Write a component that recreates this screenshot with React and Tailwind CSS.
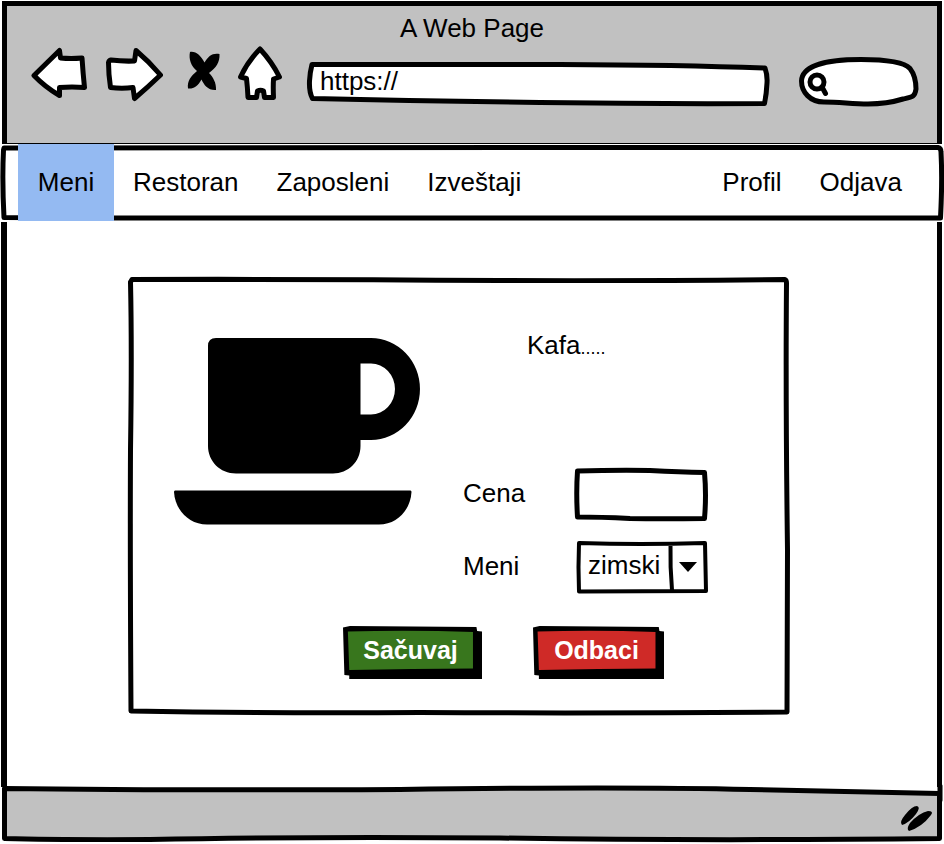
import React from "react";

// Hand-drawn outline that stretches to fill its positioned parent.
function Sketch({ viewBox, children }) {
  return (
    <svg
      aria-hidden="true"
      className="pointer-events-none absolute inset-0 h-full w-full overflow-visible"
      viewBox={viewBox}
      preserveAspectRatio="none"
      fill="none"
      stroke="#000"
      strokeWidth="5"
      strokeLinejoin="round"
      strokeLinecap="round"
    >
      {children}
    </svg>
  );
}

function ToolButton({ label, viewBox, className, children }) {
  return (
    <button type="button" aria-label={label} className={`h-[60px] shrink-0 ${className}`}>
      <svg
        aria-hidden="true"
        className="h-full w-full"
        viewBox={viewBox}
        fill="#fff"
        stroke="#000"
        strokeWidth="5"
        strokeLinejoin="round"
        strokeLinecap="round"
      >
        {children}
      </svg>
    </button>
  );
}

function BrowserHeader() {
  return (
    <header className="mx-0.5 mt-px h-[143px] border-x-[5px] border-t-[5px] border-b border-black bg-[#c1c1c1]">
      <h1 className="pt-1 text-center text-[26px] leading-9">A Web Page</h1>
      <div className="flex items-end gap-4 pr-[18px] pl-6">
        <ToolButton label="Back" viewBox="31 46 58 60" className="w-[58px]">
          <path d="M34 75.500L59.500 50.500L60.500 58Q71 59 82 58Q83 73 84.500 87.500Q72 86.500 59.500 87.500L59.500 95.500Q45 87 34 75.500Z" />
        </ToolButton>
        <ToolButton label="Forward" viewBox="105 46 58 60" className="w-[58px]">
          <path d="M111 60Q123 61.500 134.500 61L136 50.500Q149 61.500 160.500 75Q148 87 134.500 98.500L133 87.500Q122 89 110.500 87.500Q108.500 74 108.500 62.500Q109 60.500 111 60Z" />
        </ToolButton>
        <ToolButton label="Stop" viewBox="179 46 42 60" className="w-[42px]">
          <path
            stroke="none"
            fill="#000"
            d="M190 52C196 51 201 56 204.500 62.500C208 56 213 52.500 219.500 54C220 62 216 68 209 73C213 77 216.500 83 216 90C208 90.500 204 85 201.500 79.500C198 86 194 89 188 88.500C187 81 191 76 197 71C191 66 188.500 59 190 52Z"
          />
        </ToolButton>
        <ToolButton label="Home" viewBox="237 46 46 60" className="w-[46px]">
          <path d="M260 49Q272 62 279.500 77L273.500 79Q273 87 273.500 97.500L264.500 97.500L263.500 91Q260.500 89.500 257.500 91L256.500 97.500L248 97.500Q247.500 87 246.500 78.500L240.500 77Q248 61 260 49Z" />
        </ToolButton>
        <div className="relative ml-2 h-[45px] min-w-0 flex-1">
          <Sketch viewBox="307 60 463 45">
            <path
              fill="#fff"
              d="M312 63.500Q440 64 560 63.500Q680 64 765 67Q767.500 74 767 82Q766.500 93 764.500 102.500Q650 103 540 101.500Q420 100 312.500 97.500Q309 91 309.500 80Q310 71 312 63.500Z"
            />
          </Sketch>
          <input
            type="text"
            aria-label="Address"
            defaultValue="https://"
            className="relative h-full w-full bg-transparent pr-4 pb-1 pl-[13px] text-[26px] outline-none"
          />
        </div>
        <div className="relative ml-[13px] h-[50px] w-[120px] shrink-0">
          <Sketch viewBox="799 56 120 50">
            <path
              fill="#fff"
              d="M824 102C810 102 801.500 92 801.500 81C802 66 825 59.500 861 59.500C885 59.500 904 62 910 68.500C915 75 916 83 916 89C915 97 912 97 903 99C890 103 880 104 868 104C852 104 840 102 824 102Z"
            />
            <circle cx="817" cy="82" r="7" />
            <path d="M822 87L825.500 93.500" />
          </Sketch>
          <input
            type="search"
            aria-label="Search"
            className="relative h-full w-full appearance-none bg-transparent pr-3 pl-8 text-xl outline-none"
          />
        </div>
      </div>
    </header>
  );
}

function NavLink({ active, children }) {
  return (
    <a
      href="#"
      aria-current={active ? "page" : undefined}
      className={`flex min-w-24 items-center justify-center px-[19px] ${active ? "bg-[#94baf2]" : ""}`}
    >
      {children}
    </a>
  );
}

function NavBar() {
  return (
    <nav className="relative flex h-[77px] justify-between pr-[23px] pl-[18px] text-[26px]">
      <Sketch viewBox="0 144 944 77">
        <path d="M4 148Q300 147.500 600 147.500L938 147.500Q941 148 941 152Q942.500 180 940.500 218L600 218Q300 219 100 218L4 217.500Q2 180 3.500 150Z" />
      </Sketch>
      <div className="relative flex">
        <NavLink active>Meni</NavLink>
        <NavLink>Restoran</NavLink>
        <NavLink>Zaposleni</NavLink>
        <NavLink>Izveštaji</NavLink>
      </div>
      <div className="relative flex">
        <NavLink>Profil</NavLink>
        <NavLink>Odjava</NavLink>
      </div>
    </nav>
  );
}

function CupIcon() {
  return (
    <svg role="img" aria-label="Kafa" className="mt-[13px] h-[187px] w-[246px] shrink-0" viewBox="174 338 246 187">
      <path
        fillRule="evenodd"
        d="M216 338H371A49 51 0 0 1 371 440H360.500V446C360.500 462 348 473.500 333 473.500H236C220 473.500 208 461 208 446V346Q208 338 216 338ZM360.500 363.500V414.500H371A24 25.500 0 0 0 371 363.500Z"
      />
      <path d="M175 490.500H410.500Q411.500 490.500 411.500 492C410.500 510 397 524.500 379 524.500H207C189 524.500 175 510 174 492Q174 490.500 175 490.500Z" />
    </svg>
  );
}

function ActionButton({ tone, className, children }) {
  return (
    <button type="button" className={`relative h-[54px] pr-1 pb-1 text-[25px] font-bold text-white ${className}`}>
      <Sketch viewBox="0 0 100 54">
        <path stroke="none" fill="#000" d="M0 1.500L5 0L96 1L96.500 5L100 5.500V53H4.500L4.500 49.500L1 49Z" />
        <path stroke="none" fill={tone} d="M3.500 5.500Q50 4 93.500 6V42.500Q50 42.500 4.500 44Z" />
      </Sketch>
      <span className="relative">{children}</span>
    </button>
  );
}

function ItemCard() {
  return (
    <form className="relative w-[661px] pt-12 pr-20 pb-[34px] pl-[46px]" onSubmit={(e) => e.preventDefault()}>
      <Sketch viewBox="128 277 661 437">
        <path d="M132 279.500Q300 279 500 280.500Q650 281 785 279.500Q786.500 280 786.500 283Q785.500 400 787.500 550Q787 650 787 712Q600 713.500 420 712.500Q270 713.500 131 711Q130 550 130.500 450Q132 350 130.500 282Z" />
      </Sketch>
      <div className="relative flex gap-[43px]">
        <CupIcon />
        <div className="w-[245px] text-[26px]">
          <p className="pl-16 leading-10">
            Kafa<span className="text-lg">.....</span>
          </p>
          <div className="mt-[103px] flex items-center justify-between">
            <label htmlFor="price" className="pb-0.5">Cena</label>
            <div className="relative h-[53px] w-[134px]">
              <Sketch viewBox="574 468 134 53">
                <path d="M577.500 471Q615 470 650 470.500Q680 472 704.500 472.500Q706.500 495 704.500 518.500Q660 519 630 518.500Q600 517 577.500 517Q576 493 577.500 471Z" />
              </Sketch>
              <input id="price" type="text" className="relative h-full w-full bg-transparent px-3 outline-none" />
            </div>
          </div>
          <div className="mt-5 flex items-center justify-between">
            <label htmlFor="menu" className="pb-0.5">Meni</label>
            <div className="relative h-[53px] w-[134px]">
              <Sketch viewBox="574 541 134 53">
                <path strokeWidth="4" d="M579 543Q640 545 705 543L706 591L579 591.500Q578 567 579 543ZM670.500 544Q670 567 672 590" />
                <path stroke="none" fill="#000" d="M679 562H697L688 572Z" />
              </Sketch>
              <select id="menu" className="relative h-full w-full appearance-none bg-transparent pb-1 pl-[14px] outline-none">
                <option>zimski</option>
              </select>
            </div>
          </div>
        </div>
      </div>
      <div className="relative mt-8 ml-[169px] flex gap-[51px]">
        <ActionButton tone="#38761d" className="w-[139px]">Sačuvaj</ActionButton>
        <ActionButton tone="#cf2a27" className="w-[131px]">Odbaci</ActionButton>
      </div>
    </form>
  );
}

function StatusBar() {
  return (
    <footer className="relative flex h-[57px] items-end justify-end pr-[10px] pb-[11px]">
      <Sketch viewBox="0 787 944 57">
        <path
          fill="#c1c1c1"
          d="M4.500 788.500Q150 790.500 400 789.500Q620 786.500 750 789.500L939.500 793.500V838.500Q700 841 500 838Q300 836.500 150 839.500Q60 840 4.500 838.500Z"
        />
        <path d="M940 786V800" />
      </Sketch>
      <svg aria-hidden="true" className="relative h-[30px] w-9" viewBox="898 803 36 30">
        <path d="M902 825Q899 822 905 815Q912 806 917 806Q921 807 916 814Q909 823 902 825ZM909 831Q906 829 910 823Q919 813 928 811Q934 811 931 815Q922 827 909 831Z" />
      </svg>
    </footer>
  );
}

export default function App() {
  return (
    <div className="flex min-h-screen flex-col bg-white font-['Liberation_Sans',Arial,sans-serif] text-black">
      <BrowserHeader />
      <NavBar />
      <main className="mr-0.5 ml-px mt-px flex-1 border-r-[5px] border-l-[6px] border-black pt-[55px] pb-6 pl-[121px]">
        <ItemCard />
      </main>
      <StatusBar />
    </div>
  );
}
